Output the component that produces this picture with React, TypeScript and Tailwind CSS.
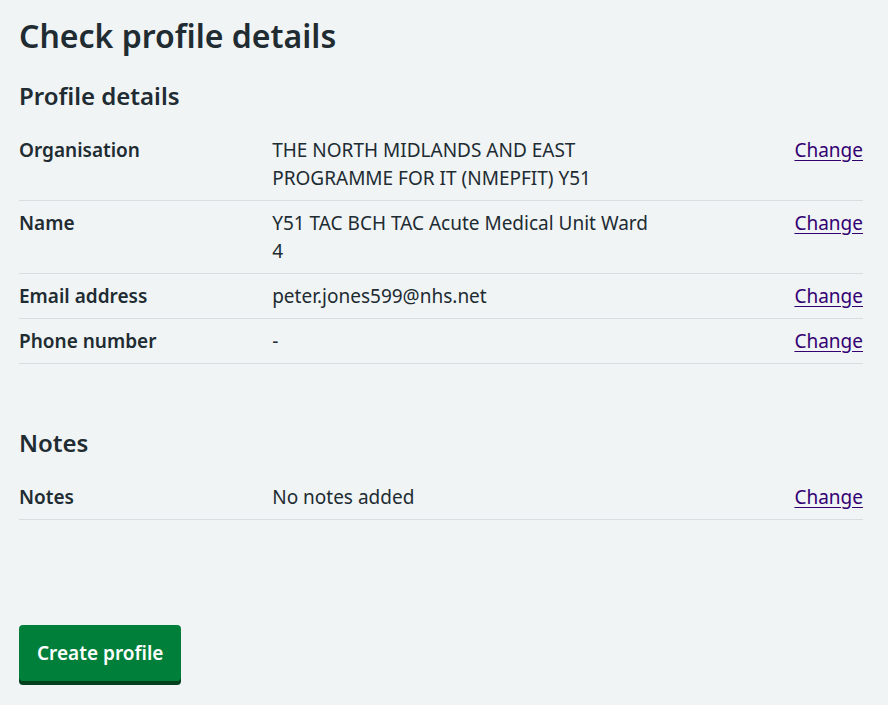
const rows = [
  { key: "Organisation", value: "THE NORTH MIDLANDS AND EAST PROGRAMME FOR IT (NMEPFIT) Y51" },
  { key: "Name", value: "Y51 TAC BCH TAC Acute Medical Unit Ward 4" },
  { key: "Email address", value: "peter.jones599@nhs.net" },
  { key: "Phone number", value: "-" },
];

function SummaryRow({ label, value }: { label: string; value: string }) {
  return (
    <div className="flex border-b border-[#d8dde0] py-2">
      <dt className="w-[30%] pr-6 font-semibold">{label}</dt>
      <dd className="w-[50%] pr-9">{value}</dd>
      <dd className="w-[20%] text-right">
        <a href="#" className="text-[#330072] underline underline-offset-[3px]">
          Change
        </a>
      </dd>
    </div>
  );
}

export default function App() {
  return (
    <div
      className="min-h-[705px] bg-[#f0f4f5] text-[#212b32] text-[19px] leading-7"
      style={{ fontFamily: '"Noto Sans", Arial, sans-serif' }}
    >
      <div className="ml-[19px] w-[844px] pt-4">
        <h1 className="text-[32px] font-semibold leading-10 mb-6">Check profile details</h1>

        <h2 className="text-[24px] font-semibold leading-8 mb-4">Profile details</h2>
        <dl>
          {rows.map((r) => (
            <SummaryRow key={r.key} label={r.key} value={r.value} />
          ))}
        </dl>

        <h2 className="text-[24px] font-semibold leading-8 mt-[63px] mb-4">Notes</h2>
        <dl>
          <SummaryRow label="Notes" value="No notes added" />
        </dl>

        <button
          type="button"
          className="mt-[105px] rounded-[4px] border-2 border-transparent bg-[#007f3b] px-4 py-3 font-semibold leading-7 text-white shadow-[0_4px_0_#00401e]"
        >
          Create profile
        </button>
      </div>
    </div>
  );
}
